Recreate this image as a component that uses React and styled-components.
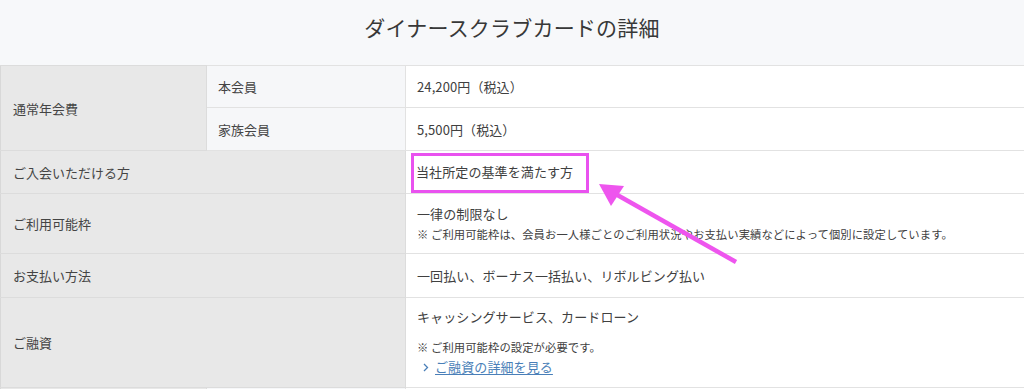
import React from "react";
import styled, { createGlobalStyle } from "styled-components";

const Global = createGlobalStyle`
  html, body { margin: 0; padding: 0; background: #ffffff; }
  body {
    font-family: "Noto Sans CJK JP", "Noto Sans", sans-serif;
    color: #404040;
    overflow: hidden;
  }
`;

const Page = styled.div`
  position: relative;
  width: 1024px;
  height: 389px;
  overflow: hidden;
`;

const TitleBar = styled.div`
  height: 65px;
  background: #f7f8fa;
  display: flex;
  align-items: center;
  justify-content: center;
  box-sizing: border-box;
  padding-bottom: 12px;
`;

const Title = styled.h2`
  margin: 0;
  font-size: 21px;
  font-weight: 400;
  color: #383838;
  letter-spacing: 0.2px;
`;

const Table = styled.table`
  width: 100%;
  border-collapse: collapse;
  table-layout: fixed;
  font-size: 13px;
`;

const Row = styled.tr`
  height: ${(p) => p.$h}px;
`;

const Head = styled.th`
  background: #e8e8e8;
  border: 1px solid #dcdcdc;
  border-left-color: #d8d8d8;
  text-align: left;
  font-weight: 400;
  color: #444;
  padding: 0 12px;
  vertical-align: middle;
`;

const SubHead = styled.th`
  background: #f6f7f9;
  border: 1px solid #e2e2e2;
  text-align: left;
  font-weight: 400;
  color: #444;
  padding: 0 11px;
  vertical-align: middle;
`;

const Cell = styled.td`
  background: #fff;
  border: 1px solid #e2e2e2;
  border-right: none;
  padding: ${(p) => p.$pad || "0 11px"};
  vertical-align: middle;
  color: #404040;
  letter-spacing: 0.1px;
`;

const Line = styled.div`
  line-height: 20px;
  margin-bottom: ${(p) => p.$mb || 0}px;
`;

const Note = styled.div`
  font-size: 11.3px;
  line-height: 20px;
  color: #404040;
`;

const LinkLine = styled.div`
  display: flex;
  align-items: center;
  gap: 6px;
  line-height: 20px;
  padding-left: 6px;
`;

const Chevron = styled.svg`
  width: 6px;
  height: 9px;
  flex: none;
`;

const Anchor = styled.a`
  color: #4a7fb8;
  text-decoration: underline;
  text-underline-offset: 2px;
  font-size: 13px;
`;

const Highlight = styled.span`
  display: inline-block;
  border: 3px solid #e952ef;
  margin: 0 0 -2px -6px;
  padding: 6px 13px 8px 2px;
  line-height: 20px;
`;

const Arrow = styled.svg`
  position: absolute;
  left: 0;
  top: 0;
  width: 1024px;
  height: 389px;
  pointer-events: none;
`;

export default function App() {
  return (
    <Page>
      <Global />
      <TitleBar>
        <Title>ダイナースクラブカードの詳細</Title>
      </TitleBar>
      <Table>
        <colgroup>
          <col style={{ width: 206 }} />
          <col style={{ width: 199 }} />
          <col />
        </colgroup>
        <tbody>
          <Row $h={42}>
            <Head rowSpan={2}>通常年会費</Head>
            <SubHead>本会員</SubHead>
            <Cell>24,200円（税込）</Cell>
          </Row>
          <Row $h={43}>
            <SubHead>家族会員</SubHead>
            <Cell>5,500円（税込）</Cell>
          </Row>
          <Row $h={43}>
            <Head colSpan={2}>ご入会いただける方</Head>
            <Cell>
              <Highlight>当社所定の基準を満たす方</Highlight>
            </Cell>
          </Row>
          <Row $h={60}>
            <Head colSpan={2}>ご利用可能枠</Head>
            <Cell>
              <Line>一律の制限なし</Line>
              <Note>※ ご利用可能枠は、会員お一人様ごとのご利用状況やお支払い実績などによって個別に設定しています。</Note>
            </Cell>
          </Row>
          <Row $h={44}>
            <Head colSpan={2}>お支払い方法</Head>
            <Cell>一回払い、ボーナス一括払い、リボルビング払い</Cell>
          </Row>
          <Row $h={89}>
            <Head colSpan={2}>ご融資</Head>
            <Cell $pad="9px 11px 10px">
              <Line $mb={10}>キャッシングサービス、カードローン</Line>
              <Note>※ ご利用可能枠の設定が必要です。</Note>
              <LinkLine>
                <Chevron viewBox="0 0 6 9">
                  <path d="M1 1 L4.5 4.5 L1 8" fill="none" stroke="#4a7fb8" strokeWidth="1.3" />
                </Chevron>
                <Anchor href="#">ご融資の詳細を見る</Anchor>
              </LinkLine>
            </Cell>
          </Row>
          <Row $h={40}>
            <Head rowSpan={2}>&nbsp;</Head>
            <SubHead>&nbsp;</SubHead>
            <Cell>&nbsp;</Cell>
          </Row>
        </tbody>
      </Table>
      <Arrow viewBox="0 0 1024 389">
        <line x1="736" y1="262" x2="612" y2="192" stroke="#ee55ee" strokeWidth="4.5" strokeLinecap="butt" />
        <polygon points="599,184 624,186 611,206" fill="#ee55ee" />
      </Arrow>
    </Page>
  );
}
